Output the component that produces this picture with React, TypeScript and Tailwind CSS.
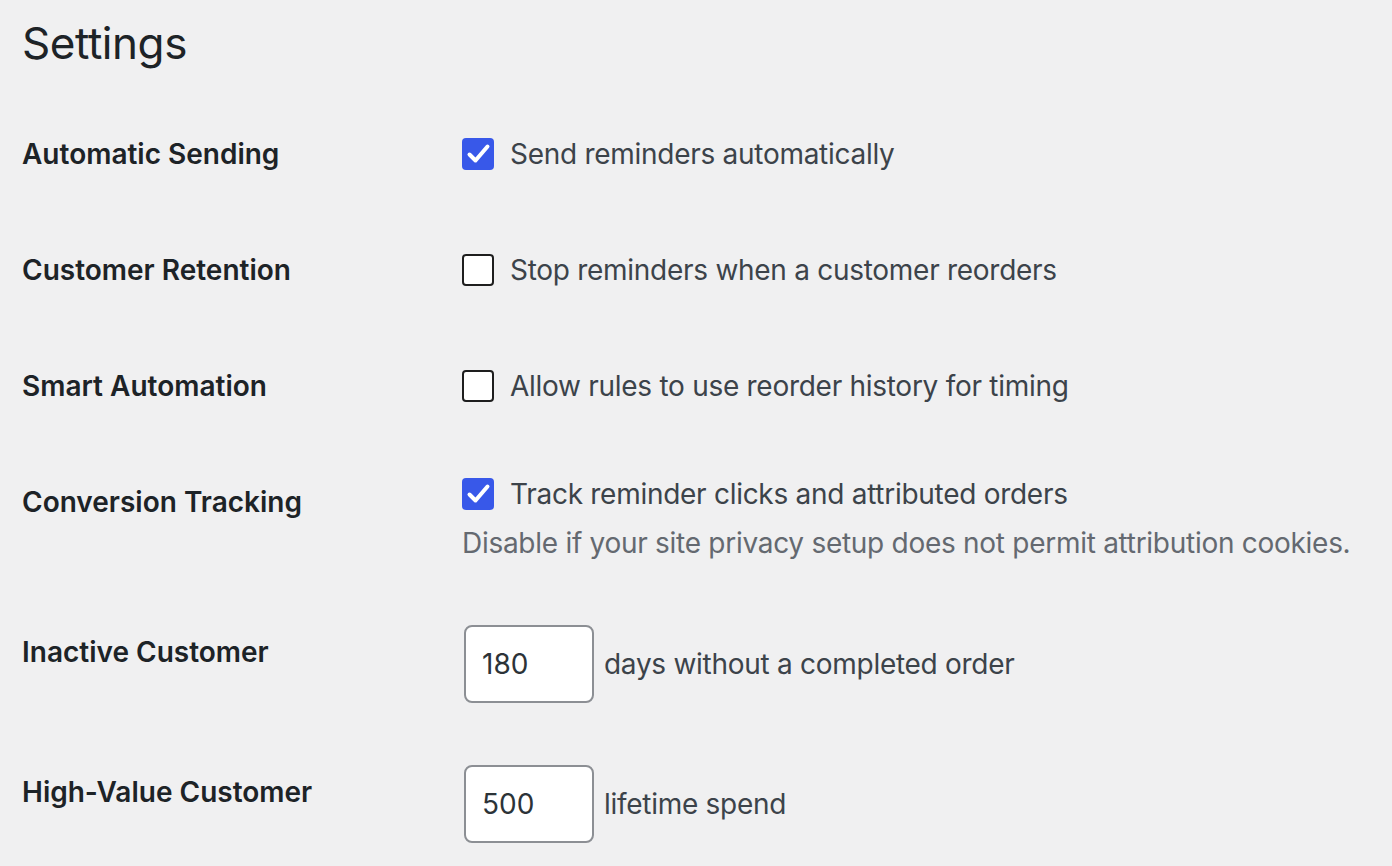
const FONT = "font-['Inter','Noto_Sans',sans-serif]"

type Row =
  | { kind: "check"; label: string; text: string; checked: boolean; description?: string }
  | { kind: "number"; label: string; value: string; suffix: string }

const ROWS: Row[] = [
  { kind: "check", label: "Automatic Sending", text: "Send reminders automatically", checked: true },
  { kind: "check", label: "Customer Retention", text: "Stop reminders when a customer reorders", checked: false },
  { kind: "check", label: "Smart Automation", text: "Allow rules to use reorder history for timing", checked: false },
  {
    kind: "check",
    label: "Conversion Tracking",
    text: "Track reminder clicks and attributed orders",
    checked: true,
    description: "Disable if your site privacy setup does not permit attribution cookies.",
  },
  { kind: "number", label: "Inactive Customer", value: "180", suffix: "days without a completed order" },
  { kind: "number", label: "High-Value Customer", value: "500", suffix: "lifetime spend" },
]

function Checkbox({ checked }: { checked: boolean }) {
  if (checked) {
    return (
      <span className="w-[32px] h-[32px] shrink-0 rounded-[4px] bg-[#3858e9] flex items-center justify-center">
        <svg width="32" height="32" viewBox="0 0 32 32">
          <path d="M7.5 16.5 L13.5 22.5 L25.5 8.5" fill="none" stroke="white" strokeWidth="4" strokeLinecap="round" strokeLinejoin="round" />
        </svg>
      </span>
    )
  }
  return <span className="w-[32px] h-[32px] shrink-0 rounded-[4px] border-2 border-[#1e1e1e] bg-white" />
}

export default function App() {
  return (
    <div className={`min-h-screen bg-[#f0f0f1] px-[22px] ${FONT}`}>
      <h1 className="pt-[13px] pb-[13px] text-[44px] leading-[60px] tracking-[-0.01em] font-normal text-[#1d2327]">Settings</h1>

      <div className="mt-[10px]">
        {ROWS.map(row => (
          <div key={row.label} className="flex">
            <div className="w-[440px] shrink-0 py-[40px] text-[28px] leading-[36px] font-semibold text-[#1d2327]">
              {row.label}
            </div>

            {row.kind === "check" ? (
              <div className="flex-1 py-[30px]">
                <label className={`flex items-center gap-[16px] text-[28px] tracking-[-0.01em] text-[#3c434a] ${row.description ? "h-[40px]" : "h-[56px]"}`}>
                  <Checkbox checked={row.checked} />
                  <span>{row.text}</span>
                </label>
                {row.description && (
                  <p className="mt-[8px] whitespace-nowrap text-[28px] leading-[42px] tracking-[-0.01em] text-[#646970]">{row.description}</p>
                )}
              </div>
            ) : (
              <div className="flex-1 py-[31px] flex items-center">
                <div className="ml-[2px] w-[130px] h-[78px] border-2 border-[#8c8f94] rounded-[8px] bg-white px-[16px] flex items-center text-[28px] text-[#2c3338]">
                  {row.value}
                </div>
                <span className="ml-[10px] text-[28px] tracking-[-0.01em] text-[#3c434a]">{row.suffix}</span>
              </div>
            )}
          </div>
        ))}
      </div>
    </div>
  )
}
